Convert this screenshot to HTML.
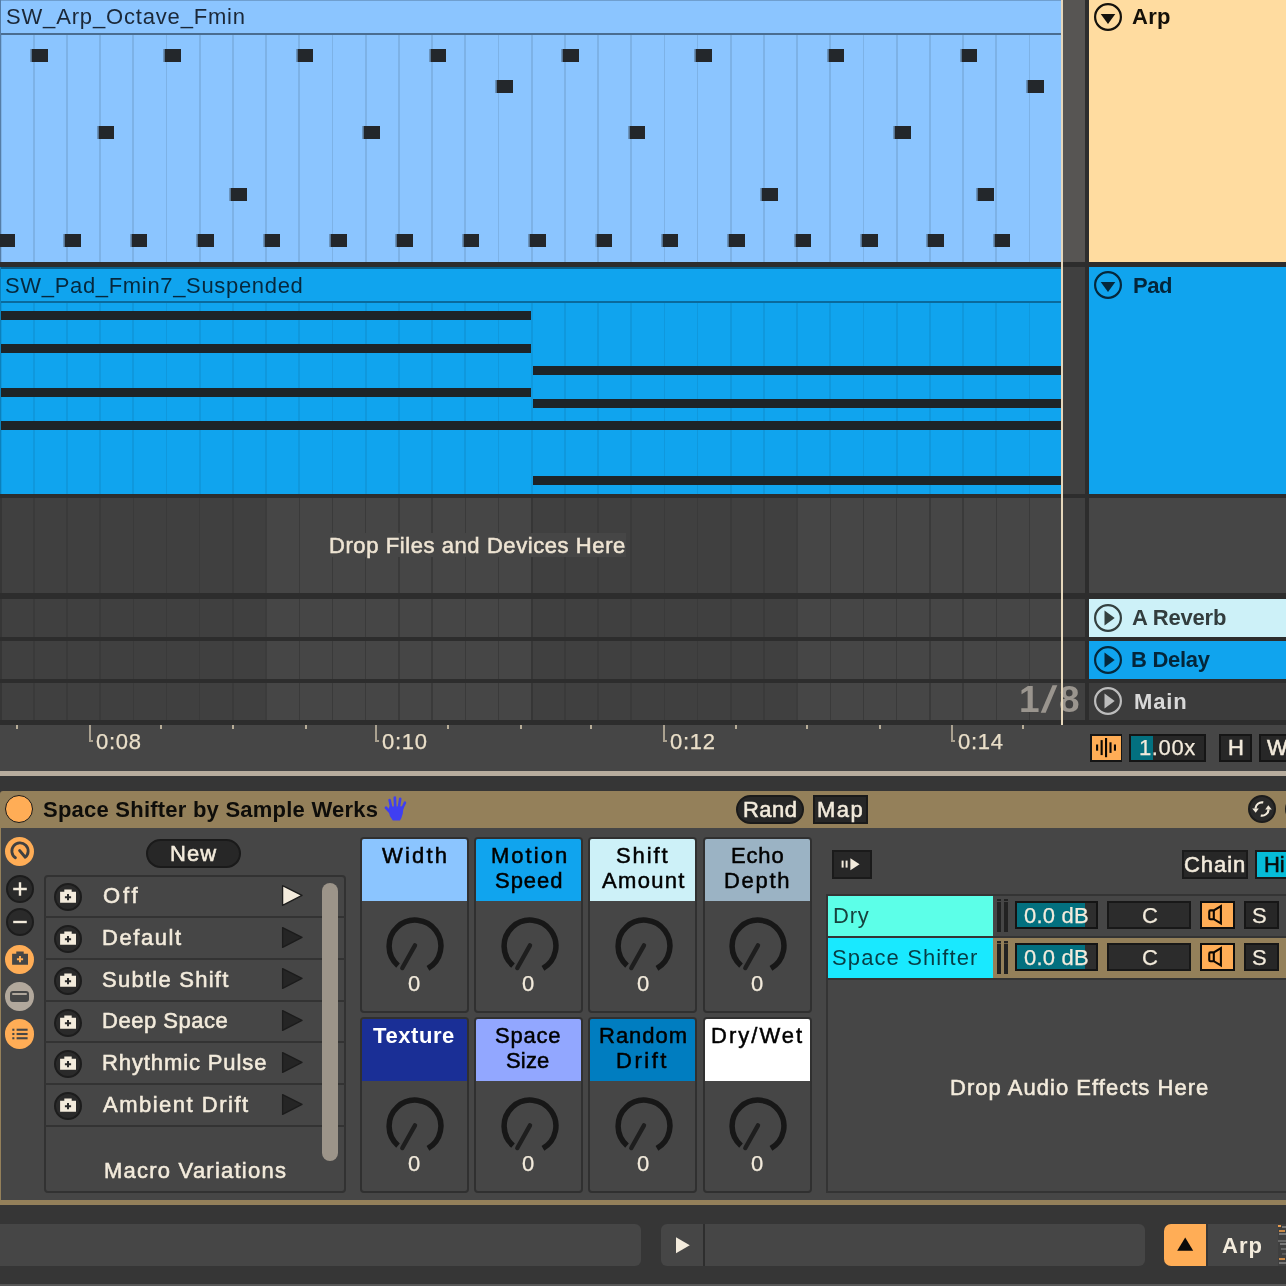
<!DOCTYPE html>
<html lang="en"><head><meta charset="utf-8"><title>Space Shifter</title>
<style>
*{box-sizing:border-box;margin:0;padding:0}
html,body{width:1286px;height:1286px;overflow:hidden;background:#363636}
body{position:relative;font-family:"Liberation Sans",sans-serif;font-size:22px;line-height:22px;color:#f3ebdc}
.a{position:absolute}
.t{position:absolute;white-space:nowrap;line-height:22px;height:22px;will-change:transform}
.b{font-weight:bold}
.s{-webkit-text-stroke:0.55px currentColor}
.m{-webkit-text-stroke:0.25px currentColor}
.s2{-webkit-text-stroke:0.5px currentColor}
.note{position:absolute;background:#23272b;height:13px;width:15.6px;box-shadow:-1.6px 0 0 rgba(35,39,43,.5)}
.bar{position:absolute;background:#1d2428;height:9px}
.sep{position:absolute;background:#2d2d2d}
.circ{position:absolute;width:28px;height:28px;border-radius:50%}
.dk{background:#2a2a2a;border:2px solid #1c1c1c}
.or{background:#ffad56}
.box{position:absolute;background:#272727;border:2px solid #1a1a1a}
.cell{position:absolute;width:109px;height:176px;border:2px solid #303030;border-radius:4px;background:#464646}
.hd{position:absolute;left:0;top:0;width:105px;height:62px;border-radius:2px 2px 0 0}
.row{position:absolute;left:45px;width:300px;height:2px;background:#333}
svg{position:absolute;overflow:visible}
</style></head>
<body>
<div class="a" style="left:0;top:0;width:1061px;height:262px;background:#8bc5ff"></div>
<div class="a" style="left:0;top:267px;width:1061px;height:227px;background:#10a4ee"></div>
<div class="sep" style="left:0;top:262px;width:1286px;height:5px;background:#2d2d2d"></div>
<div class="a" style="left:0;top:494px;width:1089px;height:231px;background:#404040"></div>
<div class="a" style="left:265.52px;top:494px;width:265.52px;height:231px;background:#464646"></div>
<div class="a" style="left:796.56px;top:494px;width:264.44px;height:231px;background:#464646"></div>
<div class="a" style="left:-0.30px;top:35px;width:1.8px;height:227px;background:#7db2e6"></div>
<div class="a" style="left:-0.30px;top:303px;width:1.8px;height:191px;background:#0f98dd"></div>
<div class="a" style="left:-0.40px;top:497px;width:2.0px;height:228px;background:#363636"></div>
<div class="a" style="left:32.89px;top:35px;width:1.8px;height:227px;background:#7db2e6"></div>
<div class="a" style="left:32.89px;top:303px;width:1.8px;height:191px;background:#0f98dd"></div>
<div class="a" style="left:33.04px;top:497px;width:1.5px;height:228px;background:#3a3a3a"></div>
<div class="a" style="left:66.08px;top:35px;width:1.8px;height:227px;background:#7db2e6"></div>
<div class="a" style="left:66.08px;top:303px;width:1.8px;height:191px;background:#0f98dd"></div>
<div class="a" style="left:66.23px;top:497px;width:1.5px;height:228px;background:#3a3a3a"></div>
<div class="a" style="left:99.27px;top:35px;width:1.8px;height:227px;background:#7db2e6"></div>
<div class="a" style="left:99.27px;top:303px;width:1.8px;height:191px;background:#0f98dd"></div>
<div class="a" style="left:99.42px;top:497px;width:1.5px;height:228px;background:#3a3a3a"></div>
<div class="a" style="left:132.46px;top:35px;width:1.8px;height:227px;background:#7db2e6"></div>
<div class="a" style="left:132.46px;top:303px;width:1.8px;height:191px;background:#0f98dd"></div>
<div class="a" style="left:132.61px;top:497px;width:1.5px;height:228px;background:#3a3a3a"></div>
<div class="a" style="left:165.65px;top:35px;width:1.8px;height:227px;background:#7db2e6"></div>
<div class="a" style="left:165.65px;top:303px;width:1.8px;height:191px;background:#0f98dd"></div>
<div class="a" style="left:165.80px;top:497px;width:1.5px;height:228px;background:#3a3a3a"></div>
<div class="a" style="left:198.84px;top:35px;width:1.8px;height:227px;background:#7db2e6"></div>
<div class="a" style="left:198.84px;top:303px;width:1.8px;height:191px;background:#0f98dd"></div>
<div class="a" style="left:198.99px;top:497px;width:1.5px;height:228px;background:#3a3a3a"></div>
<div class="a" style="left:232.03px;top:35px;width:1.8px;height:227px;background:#7db2e6"></div>
<div class="a" style="left:232.03px;top:303px;width:1.8px;height:191px;background:#0f98dd"></div>
<div class="a" style="left:232.18px;top:497px;width:1.5px;height:228px;background:#3a3a3a"></div>
<div class="a" style="left:265.22px;top:35px;width:1.8px;height:227px;background:#7db2e6"></div>
<div class="a" style="left:265.22px;top:303px;width:1.8px;height:191px;background:#0f98dd"></div>
<div class="a" style="left:265.12px;top:497px;width:2.0px;height:228px;background:#3c3c3c"></div>
<div class="a" style="left:298.41px;top:35px;width:1.8px;height:227px;background:#7db2e6"></div>
<div class="a" style="left:298.41px;top:303px;width:1.8px;height:191px;background:#0f98dd"></div>
<div class="a" style="left:298.56px;top:497px;width:1.5px;height:228px;background:#3a3a3a"></div>
<div class="a" style="left:331.60px;top:35px;width:1.8px;height:227px;background:#7db2e6"></div>
<div class="a" style="left:331.60px;top:303px;width:1.8px;height:191px;background:#0f98dd"></div>
<div class="a" style="left:331.75px;top:497px;width:1.5px;height:228px;background:#3a3a3a"></div>
<div class="a" style="left:364.79px;top:35px;width:1.8px;height:227px;background:#7db2e6"></div>
<div class="a" style="left:364.79px;top:303px;width:1.8px;height:191px;background:#0f98dd"></div>
<div class="a" style="left:364.94px;top:497px;width:1.5px;height:228px;background:#3a3a3a"></div>
<div class="a" style="left:397.98px;top:35px;width:1.8px;height:227px;background:#7db2e6"></div>
<div class="a" style="left:397.98px;top:303px;width:1.8px;height:191px;background:#0f98dd"></div>
<div class="a" style="left:398.13px;top:497px;width:1.5px;height:228px;background:#3a3a3a"></div>
<div class="a" style="left:431.17px;top:35px;width:1.8px;height:227px;background:#7db2e6"></div>
<div class="a" style="left:431.17px;top:303px;width:1.8px;height:191px;background:#0f98dd"></div>
<div class="a" style="left:431.32px;top:497px;width:1.5px;height:228px;background:#3a3a3a"></div>
<div class="a" style="left:464.36px;top:35px;width:1.8px;height:227px;background:#7db2e6"></div>
<div class="a" style="left:464.36px;top:303px;width:1.8px;height:191px;background:#0f98dd"></div>
<div class="a" style="left:464.51px;top:497px;width:1.5px;height:228px;background:#3a3a3a"></div>
<div class="a" style="left:497.55px;top:35px;width:1.8px;height:227px;background:#7db2e6"></div>
<div class="a" style="left:497.55px;top:303px;width:1.8px;height:191px;background:#0f98dd"></div>
<div class="a" style="left:497.70px;top:497px;width:1.5px;height:228px;background:#3a3a3a"></div>
<div class="a" style="left:530.74px;top:35px;width:1.8px;height:227px;background:#7db2e6"></div>
<div class="a" style="left:530.74px;top:303px;width:1.8px;height:191px;background:#0f98dd"></div>
<div class="a" style="left:530.64px;top:497px;width:2.0px;height:228px;background:#363636"></div>
<div class="a" style="left:563.93px;top:35px;width:1.8px;height:227px;background:#7db2e6"></div>
<div class="a" style="left:563.93px;top:303px;width:1.8px;height:191px;background:#0f98dd"></div>
<div class="a" style="left:564.08px;top:497px;width:1.5px;height:228px;background:#3a3a3a"></div>
<div class="a" style="left:597.12px;top:35px;width:1.8px;height:227px;background:#7db2e6"></div>
<div class="a" style="left:597.12px;top:303px;width:1.8px;height:191px;background:#0f98dd"></div>
<div class="a" style="left:597.27px;top:497px;width:1.5px;height:228px;background:#3a3a3a"></div>
<div class="a" style="left:630.31px;top:35px;width:1.8px;height:227px;background:#7db2e6"></div>
<div class="a" style="left:630.31px;top:303px;width:1.8px;height:191px;background:#0f98dd"></div>
<div class="a" style="left:630.46px;top:497px;width:1.5px;height:228px;background:#3a3a3a"></div>
<div class="a" style="left:663.50px;top:35px;width:1.8px;height:227px;background:#7db2e6"></div>
<div class="a" style="left:663.50px;top:303px;width:1.8px;height:191px;background:#0f98dd"></div>
<div class="a" style="left:663.65px;top:497px;width:1.5px;height:228px;background:#3a3a3a"></div>
<div class="a" style="left:696.69px;top:35px;width:1.8px;height:227px;background:#7db2e6"></div>
<div class="a" style="left:696.69px;top:303px;width:1.8px;height:191px;background:#0f98dd"></div>
<div class="a" style="left:696.84px;top:497px;width:1.5px;height:228px;background:#3a3a3a"></div>
<div class="a" style="left:729.88px;top:35px;width:1.8px;height:227px;background:#7db2e6"></div>
<div class="a" style="left:729.88px;top:303px;width:1.8px;height:191px;background:#0f98dd"></div>
<div class="a" style="left:730.03px;top:497px;width:1.5px;height:228px;background:#3a3a3a"></div>
<div class="a" style="left:763.07px;top:35px;width:1.8px;height:227px;background:#7db2e6"></div>
<div class="a" style="left:763.07px;top:303px;width:1.8px;height:191px;background:#0f98dd"></div>
<div class="a" style="left:763.22px;top:497px;width:1.5px;height:228px;background:#3a3a3a"></div>
<div class="a" style="left:796.26px;top:35px;width:1.8px;height:227px;background:#7db2e6"></div>
<div class="a" style="left:796.26px;top:303px;width:1.8px;height:191px;background:#0f98dd"></div>
<div class="a" style="left:796.16px;top:497px;width:2.0px;height:228px;background:#3c3c3c"></div>
<div class="a" style="left:829.45px;top:35px;width:1.8px;height:227px;background:#7db2e6"></div>
<div class="a" style="left:829.45px;top:303px;width:1.8px;height:191px;background:#0f98dd"></div>
<div class="a" style="left:829.60px;top:497px;width:1.5px;height:228px;background:#3a3a3a"></div>
<div class="a" style="left:862.64px;top:35px;width:1.8px;height:227px;background:#7db2e6"></div>
<div class="a" style="left:862.64px;top:303px;width:1.8px;height:191px;background:#0f98dd"></div>
<div class="a" style="left:862.79px;top:497px;width:1.5px;height:228px;background:#3a3a3a"></div>
<div class="a" style="left:895.83px;top:35px;width:1.8px;height:227px;background:#7db2e6"></div>
<div class="a" style="left:895.83px;top:303px;width:1.8px;height:191px;background:#0f98dd"></div>
<div class="a" style="left:895.98px;top:497px;width:1.5px;height:228px;background:#3a3a3a"></div>
<div class="a" style="left:929.02px;top:35px;width:1.8px;height:227px;background:#7db2e6"></div>
<div class="a" style="left:929.02px;top:303px;width:1.8px;height:191px;background:#0f98dd"></div>
<div class="a" style="left:929.17px;top:497px;width:1.5px;height:228px;background:#3a3a3a"></div>
<div class="a" style="left:962.21px;top:35px;width:1.8px;height:227px;background:#7db2e6"></div>
<div class="a" style="left:962.21px;top:303px;width:1.8px;height:191px;background:#0f98dd"></div>
<div class="a" style="left:962.36px;top:497px;width:1.5px;height:228px;background:#3a3a3a"></div>
<div class="a" style="left:995.40px;top:35px;width:1.8px;height:227px;background:#7db2e6"></div>
<div class="a" style="left:995.40px;top:303px;width:1.8px;height:191px;background:#0f98dd"></div>
<div class="a" style="left:995.55px;top:497px;width:1.5px;height:228px;background:#3a3a3a"></div>
<div class="a" style="left:1028.59px;top:35px;width:1.8px;height:227px;background:#7db2e6"></div>
<div class="a" style="left:1028.59px;top:303px;width:1.8px;height:191px;background:#0f98dd"></div>
<div class="a" style="left:1028.74px;top:497px;width:1.5px;height:228px;background:#3a3a3a"></div>
<div class="a" style="left:1061.78px;top:35px;width:1.8px;height:227px;background:#7db2e6"></div>
<div class="a" style="left:1061.78px;top:303px;width:1.8px;height:191px;background:#0f98dd"></div>
<div class="a" style="left:0;top:0;width:1061px;height:1px;background:#6f9fcf"></div>
<div class="a" style="left:0;top:33px;width:1061px;height:2px;background:#4a6d90"></div>
<div class="a" style="left:0;top:267px;width:1061px;height:1.6px;background:#07608c"></div>
<div class="a" style="left:0;top:301px;width:1061px;height:2px;background:#0a6a9c"></div>
<div class="a" style="left:0;top:0;width:1px;height:262px;background:#557da6"></div>
<div class="a" style="left:0;top:267px;width:1px;height:227px;background:#0c80bb"></div>
<div class="sep" style="left:0;top:493.5px;width:1286px;height:4.0px"></div>
<div class="sep" style="left:0;top:593.0px;width:1286px;height:6.0px"></div>
<div class="sep" style="left:0;top:637.0px;width:1286px;height:4.0px"></div>
<div class="sep" style="left:0;top:679.0px;width:1286px;height:4.0px"></div>
<div class="sep" style="left:0;top:720.0px;width:1286px;height:4.5px"></div>
<div class="note" style="left:32.29px;top:49.0px"></div>
<div class="note" style="left:165.05px;top:49.0px"></div>
<div class="note" style="left:297.81px;top:49.0px"></div>
<div class="note" style="left:430.57px;top:49.0px"></div>
<div class="note" style="left:563.33px;top:49.0px"></div>
<div class="note" style="left:696.09px;top:49.0px"></div>
<div class="note" style="left:828.85px;top:49.0px"></div>
<div class="note" style="left:961.61px;top:49.0px"></div>
<div class="note" style="left:496.95px;top:79.5px"></div>
<div class="note" style="left:1027.99px;top:79.5px"></div>
<div class="note" style="left:98.67px;top:126.0px"></div>
<div class="note" style="left:364.19px;top:126.0px"></div>
<div class="note" style="left:629.71px;top:126.0px"></div>
<div class="note" style="left:895.23px;top:126.0px"></div>
<div class="note" style="left:231.43px;top:187.5px"></div>
<div class="note" style="left:762.47px;top:187.5px"></div>
<div class="note" style="left:978.20px;top:187.5px"></div>
<div class="note" style="left:-0.90px;top:234.0px"></div>
<div class="note" style="left:65.48px;top:234.0px"></div>
<div class="note" style="left:131.86px;top:234.0px"></div>
<div class="note" style="left:198.24px;top:234.0px"></div>
<div class="note" style="left:264.62px;top:234.0px"></div>
<div class="note" style="left:331.00px;top:234.0px"></div>
<div class="note" style="left:397.38px;top:234.0px"></div>
<div class="note" style="left:463.76px;top:234.0px"></div>
<div class="note" style="left:530.14px;top:234.0px"></div>
<div class="note" style="left:596.52px;top:234.0px"></div>
<div class="note" style="left:662.90px;top:234.0px"></div>
<div class="note" style="left:729.28px;top:234.0px"></div>
<div class="note" style="left:795.66px;top:234.0px"></div>
<div class="note" style="left:862.04px;top:234.0px"></div>
<div class="note" style="left:928.42px;top:234.0px"></div>
<div class="note" style="left:994.80px;top:234.0px"></div>
<div class="bar" style="left:1px;top:311px;width:529.5px"></div>
<div class="bar" style="left:1px;top:344px;width:529.5px"></div>
<div class="bar" style="left:1px;top:388px;width:529.5px"></div>
<div class="bar" style="left:1px;top:421px;width:1060px"></div>
<div class="bar" style="left:532.5px;top:366px;width:528.5px"></div>
<div class="bar" style="left:532.5px;top:399px;width:528.5px"></div>
<div class="bar" style="left:532.5px;top:476px;width:528.5px"></div>
<div class="t" style="left:5.65px;top:5.75px;color:#1b2838;letter-spacing:0.83px;">SW_Arp_Octave_Fmin</div>
<div class="t" style="left:5.30px;top:274.75px;color:#06283d;letter-spacing:0.67px;">SW_Pad_Fmin7_Suspended</div>
<div class="a" style="left:328px;top:533px;width:298px;height:24px;background:#464646"></div>
<div class="t s" style="left:328.50px;top:534.75px;color:#eee4d3;letter-spacing:0.58px;">Drop Files and Devices Here</div>
<div class="a" style="left:1063px;top:0;width:22px;height:262px;background:#575553"></div>
<div class="a" style="left:1063px;top:267px;width:22px;height:227px;background:#404040"></div>
<div class="a" style="left:1085px;top:0;width:4px;height:725px;background:#2d2d2d"></div>
<div class="a" style="left:1061px;top:0;width:2px;height:725px;background:#e6d7bb"></div>
<div class="a" style="left:1089px;top:0;width:197px;height:262px;background:#ffdca0"></div>
<div class="a" style="left:1089px;top:267px;width:197px;height:227px;background:#10a4ee"></div>
<div class="a" style="left:1089px;top:497.5px;width:197px;height:95.5px;background:#464646"></div>
<div class="a" style="left:1089px;top:599px;width:197px;height:38px;background:#cdf1f8"></div>
<div class="a" style="left:1089px;top:641px;width:197px;height:38px;background:#10a4ee"></div>
<div class="a" style="left:1089px;top:683px;width:197px;height:37px;background:#3c3c3c"></div>
<svg style="left:1093.2px;top:1.7px" width="30" height="30" viewBox="-15 -15 30 30"><circle r="12.9" fill="none" stroke="#15120c" stroke-width="2.2"/><path d="M-7.3 -3.1 L7.3 -3.1 L0 7 Z" fill="#15120c"/></svg>
<svg style="left:1093.2px;top:270.4px" width="30" height="30" viewBox="-15 -15 30 30"><circle r="12.9" fill="none" stroke="#05283c" stroke-width="2.2"/><path d="M-7.3 -3.1 L7.3 -3.1 L0 7 Z" fill="#05283c"/></svg>
<svg style="left:1093.4px;top:602.8px" width="30" height="30" viewBox="-15 -15 30 30"><circle r="12.9" fill="none" stroke="#34403f" stroke-width="2.2"/><path d="M-3.5 -7.4 L6.7 0 L-3.5 7.4 Z" fill="#34403f"/></svg>
<svg style="left:1093.4px;top:644.8px" width="30" height="30" viewBox="-15 -15 30 30"><circle r="12.9" fill="none" stroke="#05283c" stroke-width="2.2"/><path d="M-3.5 -7.4 L6.7 0 L-3.5 7.4 Z" fill="#05283c"/></svg>
<svg style="left:1093.4px;top:686.2px" width="30" height="30" viewBox="-15 -15 30 30"><circle r="12.9" fill="none" stroke="#bdbdbd" stroke-width="2.2"/><path d="M-3.5 -7.4 L6.7 0 L-3.5 7.4 Z" fill="#bdbdbd"/></svg>
<div class="t b" style="left:1132.25px;top:5.75px;color:#141008;letter-spacing:0.25px;">Arp</div>
<div class="t b" style="left:1132.55px;top:274.75px;color:#04263a;letter-spacing:-0.45px;">Pad</div>
<div class="t b" style="left:1132.10px;top:606.75px;color:#333d3e;letter-spacing:-0.20px;">A Reverb</div>
<div class="t b" style="left:1131.30px;top:648.75px;color:#04263a;letter-spacing:-0.30px;">B Delay</div>
<div class="t b" style="left:1133.50px;top:690.75px;color:#d8d8d8;letter-spacing:0.87px;">Main</div>
<div class="t b" style="left:1018.90px;top:681.25px;font-size:37px;line-height:37px;height:37px;color:#9a958e;letter-spacing:4.60px;">1<span style="display:inline-block;transform:skewX(-12deg) scaleX(1.12)">/</span>8</div>
<div class="a" style="left:1061px;top:683px;width:2px;height:42px;background:#e6d7bb"></div>
<div class="a" style="left:0;top:724.5px;width:1286px;height:46.5px;background:#464646"></div>
<div class="a" style="left:0;top:771px;width:1286px;height:4.6px;background:#b7ac9d"></div>
<div class="a" style="left:89px;top:725px;width:2px;height:17px;background:#aaa190"></div>
<div class="a" style="left:89px;top:740px;width:4px;height:2px;background:#aaa190"></div>
<div class="a" style="left:375px;top:725px;width:2px;height:17px;background:#aaa190"></div>
<div class="a" style="left:375px;top:740px;width:4px;height:2px;background:#aaa190"></div>
<div class="a" style="left:663px;top:725px;width:2px;height:17px;background:#aaa190"></div>
<div class="a" style="left:663px;top:740px;width:4px;height:2px;background:#aaa190"></div>
<div class="a" style="left:951px;top:725px;width:2px;height:17px;background:#aaa190"></div>
<div class="a" style="left:951px;top:740px;width:4px;height:2px;background:#aaa190"></div>
<div class="a" style="left:16px;top:725px;width:2px;height:4px;background:#b8ad98"></div>
<div class="a" style="left:160px;top:725px;width:2px;height:4px;background:#b8ad98"></div>
<div class="a" style="left:232px;top:725px;width:2px;height:4px;background:#b8ad98"></div>
<div class="a" style="left:305px;top:725px;width:2px;height:4px;background:#b8ad98"></div>
<div class="a" style="left:447px;top:725px;width:2px;height:4px;background:#b8ad98"></div>
<div class="a" style="left:520px;top:725px;width:2px;height:4px;background:#b8ad98"></div>
<div class="a" style="left:590px;top:725px;width:2px;height:4px;background:#b8ad98"></div>
<div class="a" style="left:735px;top:725px;width:2px;height:4px;background:#b8ad98"></div>
<div class="a" style="left:806px;top:725px;width:2px;height:4px;background:#b8ad98"></div>
<div class="a" style="left:879px;top:725px;width:2px;height:4px;background:#b8ad98"></div>
<div class="a" style="left:1022px;top:725px;width:2px;height:4px;background:#b8ad98"></div>
<div class="t m" style="left:96.35px;top:730.75px;color:#eadfc9;letter-spacing:0.70px;">0:08</div>
<div class="t m" style="left:381.85px;top:730.75px;color:#eadfc9;letter-spacing:0.70px;">0:10</div>
<div class="t m" style="left:670.35px;top:730.75px;color:#eadfc9;letter-spacing:0.70px;">0:12</div>
<div class="t m" style="left:957.85px;top:730.75px;color:#eadfc9;letter-spacing:0.70px;">0:14</div>
<div class="a" style="left:1090px;top:733.8px;width:32.4px;height:27.8px;background:#151515"></div>
<div class="a" style="left:1091.8px;top:735.7px;width:28.8px;height:24.2px;background:#ffad56"></div>
<svg style="left:1092px;top:736px" width="28.5" height="24" viewBox="-14.25 -12 28.5 24"><rect x="-10.20" y="-3.50" width="2.1" height="6.2" fill="#0c0804"/><rect x="-5.65" y="-7.90" width="2.1" height="15.0" fill="#0c0804"/><rect x="-1.25" y="-10.00" width="2.1" height="19.2" fill="#0c0804"/><rect x="3.20" y="-5.70" width="2.1" height="10.6" fill="#0c0804"/><rect x="7.65" y="-3.50" width="2.1" height="6.2" fill="#0c0804"/></svg>
<div class="box" style="left:1129.3px;top:733.8px;width:76.7px;height:27.8px;border-color:#151515"></div>
<div class="a" style="left:1131.2px;top:735.8px;width:22.1px;height:24px;background:#03707f"></div>
<div class="t m" style="left:1138.75px;top:736.75px;color:#f3ebdc;letter-spacing:0.62px;">1.00x</div>
<div class="box" style="left:1219px;top:733.8px;width:33px;height:27.8px;border-color:#151515"></div>
<div class="t s" style="left:1228.10px;top:736.75px;color:#f3ebdc;">H</div>
<div class="box" style="left:1259px;top:733.8px;width:40px;height:27.8px;border-color:#151515"></div>
<div class="t s" style="left:1266.55px;top:736.75px;color:#f3ebdc;">W</div>
<div class="a" style="left:0;top:791px;width:1300px;height:414px;background:#94805a;border-radius:3px 0 0 0"></div>
<div class="a" style="left:1.1px;top:828px;width:1300px;height:372px;background:#464646"></div>
<div class="circ" style="left:5.4px;top:795px;background:#ffad56;border:1.7px solid #1a1a1a"></div>
<div class="t b" style="left:43.10px;top:798.75px;color:#0e0d0a;letter-spacing:0.23px;">Space Shifter by Sample Werks</div>
<svg style="left:383.7px;top:795px" width="25" height="27" viewBox="0 0 25 27"><g fill="none" stroke="#3f3ff2" stroke-linecap="round"><path d="M7.2 12.5 L5.6 5" stroke-width="2.6"/><path d="M11.2 11 L10.8 2.6" stroke-width="2.7"/><path d="M15 11.5 L16.2 3.8" stroke-width="2.6"/><path d="M18.2 13.5 L21 7.6" stroke-width="2.5"/><path d="M6.5 17.5 L2 12.8" stroke-width="2.8"/></g><path d="M5.2 11.5 L19.6 11.2 L18.8 18.5 Q17.5 23.5 16 25.5 L8.8 25.5 Q5 21 4.6 16 Z" fill="#3f3ff2"/></svg>
<div class="box" style="left:735.5px;top:795px;width:68px;height:28.6px;border-radius:15px"></div>
<div class="t s" style="left:742.85px;top:798.75px;color:#f3ebdc;letter-spacing:0.43px;">Rand</div>
<div class="box" style="left:812.5px;top:795px;width:55px;height:28.6px"></div>
<div class="t s" style="left:817.25px;top:798.75px;color:#f3ebdc;letter-spacing:1.45px;">Map</div>
<div class="circ dk" style="left:1248px;top:795px"></div>
<svg style="left:1248px;top:795px" width="28" height="28" viewBox="-14 -14 28 28"><g fill="none" stroke="#f3ebdc" stroke-width="2.2"><path d="M1.25 -6.6 A6.7 6.7 0 0 0 -6.6 -0.4"/><path d="M-1.25 6.6 A6.7 6.7 0 0 0 6.6 0.4"/></g><path d="M-9.8 -0.6 L-3.2 -0.6 L-6.3 3.8 Z" fill="#f3ebdc"/><path d="M9.8 0.6 L3.2 0.6 L6.3 -3.8 Z" fill="#f3ebdc"/></svg>
<div class="circ dk" style="left:1284.6px;top:795px"></div>
<div class="circ or" style="left:5.1px;top:836.8px;width:29px;height:29px"></div>
<svg style="left:4.6px;top:836.3px" width="30" height="30" viewBox="-15 -15 30 30"><path d="M-4.56 6.76 A8.15 8.15 0 1 1 5.24 6.24 L-0.4 -0.5" fill="none" stroke="#3f4041" stroke-width="2.8" stroke-linecap="round" stroke-linejoin="round"/></svg>
<div class="circ dk" style="left:5.6px;top:874.7px"></div>
<svg style="left:5.6px;top:874.7px" width="28" height="28" viewBox="-14 -14 28 28"><path d="M-6.8 0 H6.8 M0 -6.8 V6.8" stroke="#f3ebdc" stroke-width="2.4" fill="none"/></svg>
<div class="circ dk" style="left:5.6px;top:907.5px"></div>
<svg style="left:5.6px;top:907.5px" width="28" height="28" viewBox="-14 -14 28 28"><path d="M-6.8 0 H6.8" stroke="#f3ebdc" stroke-width="2.4" fill="none"/></svg>
<div class="circ or" style="left:5px;top:944.5px;width:29.4px;height:29.4px"></div>
<svg style="left:9.6px;top:951.0px" width="20" height="16" viewBox="-10 -8 20 16"><path d="M-7.9 -5.2 L-3.7 -5.2 L-3.7 -7.5 L3.7 -7.5 L3.7 -5.2 L8 -5.2 L8 5.7 L-7.9 5.7 Z" fill="#464646"/><path d="M-3.1 0.15 H3.1 M0 -2.95 V3.25" stroke="#ffad56" stroke-width="2" fill="none"/></svg>
<div class="circ" style="left:4.9px;top:981.8px;width:29.2px;height:29.2px;background:#b2a89c"></div>
<div class="a" style="left:9.9px;top:991px;width:19.4px;height:10.9px;background:#464646;border-radius:3px"></div>
<div class="a" style="left:11.8px;top:993px;width:15.6px;height:2.4px;background:#b0a79c;border-radius:1px"></div>
<div class="circ or" style="left:5px;top:1019.3px;width:29.4px;height:29.4px"></div>
<svg style="left:4.7px;top:1019px" width="30" height="30" viewBox="-15 -15 30 30"><rect x="-7.7" y="-5.30" width="2.1" height="2.1" fill="#464646"/><rect x="-3.4" y="-5.30" width="11" height="2.1" fill="#464646"/><rect x="-7.7" y="-1.05" width="2.1" height="2.1" fill="#464646"/><rect x="-3.4" y="-1.05" width="11" height="2.1" fill="#464646"/><rect x="-7.7" y="3.20" width="2.1" height="2.1" fill="#464646"/><rect x="-3.4" y="3.20" width="11" height="2.1" fill="#464646"/></svg>
<div class="box" style="left:146.4px;top:839px;width:94.3px;height:29px;border-radius:15px"></div>
<div class="t s" style="left:169.70px;top:842.75px;color:#f3ebdc;letter-spacing:1.10px;">New</div>
<div class="a" style="left:43.5px;top:874.7px;width:302.5px;height:318.4px;border:2px solid #323232;border-radius:4px"></div>
<div class="row" style="top:916.0px"></div>
<div class="circ dk" style="left:53.8px;top:883.2px"></div>
<svg style="left:58.0px;top:889.2px" width="20" height="16" viewBox="-10 -8 20 16"><path d="M-7.9 -5.2 L-3.7 -5.2 L-3.7 -7.5 L3.7 -7.5 L3.7 -5.2 L8 -5.2 L8 5.7 L-7.9 5.7 Z" fill="#f3ebdc"/><path d="M-3.1 0.15 H3.1 M0 -2.95 V3.25" stroke="#2a2a2a" stroke-width="2" fill="none"/></svg>
<div class="t s" style="left:102.90px;top:884.75px;color:#f3ebdc;letter-spacing:2.80px;">Off</div>
<svg style="left:280px;top:882.8px" width="26" height="26" viewBox="0 0 26 26"><path d="M2.6 2.6 L22 12.4 L2.6 22.4 Z" fill="#f3ebdc" stroke="#1c1c1c" stroke-width="1.3" stroke-linejoin="round"/></svg>
<div class="row" style="top:957.8px"></div>
<div class="circ dk" style="left:53.8px;top:925.0px"></div>
<svg style="left:58.0px;top:931.0px" width="20" height="16" viewBox="-10 -8 20 16"><path d="M-7.9 -5.2 L-3.7 -5.2 L-3.7 -7.5 L3.7 -7.5 L3.7 -5.2 L8 -5.2 L8 5.7 L-7.9 5.7 Z" fill="#f3ebdc"/><path d="M-3.1 0.15 H3.1 M0 -2.95 V3.25" stroke="#2a2a2a" stroke-width="2" fill="none"/></svg>
<div class="t s" style="left:101.70px;top:926.75px;color:#f3ebdc;letter-spacing:1.57px;">Default</div>
<svg style="left:280px;top:924.6px" width="26" height="26" viewBox="0 0 26 26"><path d="M2.6 2.6 L22 12.4 L2.6 22.4 Z" fill="#252525" stroke="#1c1c1c" stroke-width="1.3" stroke-linejoin="round"/></svg>
<div class="row" style="top:999.6px"></div>
<div class="circ dk" style="left:53.8px;top:966.8px"></div>
<svg style="left:58.0px;top:972.8px" width="20" height="16" viewBox="-10 -8 20 16"><path d="M-7.9 -5.2 L-3.7 -5.2 L-3.7 -7.5 L3.7 -7.5 L3.7 -5.2 L8 -5.2 L8 5.7 L-7.9 5.7 Z" fill="#f3ebdc"/><path d="M-3.1 0.15 H3.1 M0 -2.95 V3.25" stroke="#2a2a2a" stroke-width="2" fill="none"/></svg>
<div class="t s" style="left:101.60px;top:968.75px;color:#f3ebdc;letter-spacing:1.25px;">Subtle Shift</div>
<svg style="left:280px;top:966.4px" width="26" height="26" viewBox="0 0 26 26"><path d="M2.6 2.6 L22 12.4 L2.6 22.4 Z" fill="#252525" stroke="#1c1c1c" stroke-width="1.3" stroke-linejoin="round"/></svg>
<div class="row" style="top:1041.4px"></div>
<div class="circ dk" style="left:53.8px;top:1008.6px"></div>
<svg style="left:58.0px;top:1014.6px" width="20" height="16" viewBox="-10 -8 20 16"><path d="M-7.9 -5.2 L-3.7 -5.2 L-3.7 -7.5 L3.7 -7.5 L3.7 -5.2 L8 -5.2 L8 5.7 L-7.9 5.7 Z" fill="#f3ebdc"/><path d="M-3.1 0.15 H3.1 M0 -2.95 V3.25" stroke="#2a2a2a" stroke-width="2" fill="none"/></svg>
<div class="t s" style="left:102.10px;top:1009.75px;color:#f3ebdc;letter-spacing:0.53px;">Deep Space</div>
<svg style="left:280px;top:1008.2px" width="26" height="26" viewBox="0 0 26 26"><path d="M2.6 2.6 L22 12.4 L2.6 22.4 Z" fill="#252525" stroke="#1c1c1c" stroke-width="1.3" stroke-linejoin="round"/></svg>
<div class="row" style="top:1083.2px"></div>
<div class="circ dk" style="left:53.8px;top:1050.4px"></div>
<svg style="left:58.0px;top:1056.4px" width="20" height="16" viewBox="-10 -8 20 16"><path d="M-7.9 -5.2 L-3.7 -5.2 L-3.7 -7.5 L3.7 -7.5 L3.7 -5.2 L8 -5.2 L8 5.7 L-7.9 5.7 Z" fill="#f3ebdc"/><path d="M-3.1 0.15 H3.1 M0 -2.95 V3.25" stroke="#2a2a2a" stroke-width="2" fill="none"/></svg>
<div class="t s" style="left:101.90px;top:1051.75px;color:#f3ebdc;letter-spacing:0.89px;">Rhythmic Pulse</div>
<svg style="left:280px;top:1050.0px" width="26" height="26" viewBox="0 0 26 26"><path d="M2.6 2.6 L22 12.4 L2.6 22.4 Z" fill="#252525" stroke="#1c1c1c" stroke-width="1.3" stroke-linejoin="round"/></svg>
<div class="row" style="top:1125.0px"></div>
<div class="circ dk" style="left:53.8px;top:1092.2px"></div>
<svg style="left:58.0px;top:1098.2px" width="20" height="16" viewBox="-10 -8 20 16"><path d="M-7.9 -5.2 L-3.7 -5.2 L-3.7 -7.5 L3.7 -7.5 L3.7 -5.2 L8 -5.2 L8 5.7 L-7.9 5.7 Z" fill="#f3ebdc"/><path d="M-3.1 0.15 H3.1 M0 -2.95 V3.25" stroke="#2a2a2a" stroke-width="2" fill="none"/></svg>
<div class="t s" style="left:102.80px;top:1093.75px;color:#f3ebdc;letter-spacing:1.50px;">Ambient Drift</div>
<svg style="left:280px;top:1091.8px" width="26" height="26" viewBox="0 0 26 26"><path d="M2.6 2.6 L22 12.4 L2.6 22.4 Z" fill="#252525" stroke="#1c1c1c" stroke-width="1.3" stroke-linejoin="round"/></svg>
<div class="a" style="left:322px;top:883px;width:15.6px;height:278px;border-radius:8px;background:#9c9489"></div>
<div class="t s" style="left:104.25px;top:1159.75px;color:#f3ebdc;letter-spacing:1.23px;">Macro Variations</div>
<div class="cell" style="left:360.0px;top:837.0px"><div class="hd" style="background:#8bc5ff"></div></div>
<div class="t s2" style="left:382.00px;top:844.75px;color:#000000;letter-spacing:2.20px;">Width</div>
<svg style="left:385.3px;top:915.7px" width="60" height="60" viewBox="-30 -30 60 60"><path d="M-16.99 19.55 A25.90 25.90 0 1 1 12.95 22.43" fill="none" stroke="#171717" stroke-width="5.5"/><path d="M0 -0.6 L-12.69 21.98" stroke="#1e1e1e" stroke-width="4.4" stroke-linecap="round" fill="none"/></svg>
<div class="t m" style="left:408.20px;top:972.75px;color:#f3ebdc;">0</div>
<div class="cell" style="left:474.2px;top:837.0px"><div class="hd" style="background:#10a4ee"></div></div>
<div class="t s2" style="left:490.65px;top:844.75px;color:#000000;letter-spacing:2.02px;">Motion</div>
<div class="t s2" style="left:494.95px;top:869.75px;color:#000000;letter-spacing:0.98px;">Speed</div>
<svg style="left:499.5px;top:915.7px" width="60" height="60" viewBox="-30 -30 60 60"><path d="M-16.99 19.55 A25.90 25.90 0 1 1 12.95 22.43" fill="none" stroke="#171717" stroke-width="5.5"/><path d="M0 -0.6 L-12.69 21.98" stroke="#1e1e1e" stroke-width="4.4" stroke-linecap="round" fill="none"/></svg>
<div class="t m" style="left:522.40px;top:972.75px;color:#f3ebdc;">0</div>
<div class="cell" style="left:588.4px;top:837.0px"><div class="hd" style="background:#cdf1f8"></div></div>
<div class="t s2" style="left:616.15px;top:844.75px;color:#000000;letter-spacing:1.88px;">Shift</div>
<div class="t s2" style="left:602.10px;top:869.75px;color:#000000;letter-spacing:1.32px;">Amount</div>
<svg style="left:613.7px;top:915.7px" width="60" height="60" viewBox="-30 -30 60 60"><path d="M-16.99 19.55 A25.90 25.90 0 1 1 12.95 22.43" fill="none" stroke="#171717" stroke-width="5.5"/><path d="M0 -0.6 L-12.69 21.98" stroke="#1e1e1e" stroke-width="4.4" stroke-linecap="round" fill="none"/></svg>
<div class="t m" style="left:636.60px;top:972.75px;color:#f3ebdc;">0</div>
<div class="cell" style="left:702.6px;top:837.0px"><div class="hd" style="background:#9bb3c4"></div></div>
<div class="t s2" style="left:730.75px;top:844.75px;color:#000000;letter-spacing:0.83px;">Echo</div>
<div class="t s2" style="left:723.80px;top:869.75px;color:#000000;letter-spacing:1.70px;">Depth</div>
<svg style="left:727.9px;top:915.7px" width="60" height="60" viewBox="-30 -30 60 60"><path d="M-16.99 19.55 A25.90 25.90 0 1 1 12.95 22.43" fill="none" stroke="#171717" stroke-width="5.5"/><path d="M0 -0.6 L-12.69 21.98" stroke="#1e1e1e" stroke-width="4.4" stroke-linecap="round" fill="none"/></svg>
<div class="t m" style="left:750.80px;top:972.75px;color:#f3ebdc;">0</div>
<div class="cell" style="left:360.0px;top:1017.0px"><div class="hd" style="background:#1a2f96"></div></div>
<div class="t b" style="left:372.90px;top:1024.75px;color:#ffffff;letter-spacing:0.57px;">Texture</div>
<svg style="left:385.3px;top:1095.7px" width="60" height="60" viewBox="-30 -30 60 60"><path d="M-16.99 19.55 A25.90 25.90 0 1 1 12.95 22.43" fill="none" stroke="#171717" stroke-width="5.5"/><path d="M0 -0.6 L-12.69 21.98" stroke="#1e1e1e" stroke-width="4.4" stroke-linecap="round" fill="none"/></svg>
<div class="t m" style="left:408.20px;top:1152.75px;color:#f3ebdc;">0</div>
<div class="cell" style="left:474.2px;top:1017.0px"><div class="hd" style="background:#92a7ff"></div></div>
<div class="t s2" style="left:495.15px;top:1024.75px;color:#000000;letter-spacing:0.77px;">Space</div>
<div class="t s2" style="left:506.25px;top:1049.75px;color:#000000;letter-spacing:0.17px;">Size</div>
<svg style="left:499.5px;top:1095.7px" width="60" height="60" viewBox="-30 -30 60 60"><path d="M-16.99 19.55 A25.90 25.90 0 1 1 12.95 22.43" fill="none" stroke="#171717" stroke-width="5.5"/><path d="M0 -0.6 L-12.69 21.98" stroke="#1e1e1e" stroke-width="4.4" stroke-linecap="round" fill="none"/></svg>
<div class="t m" style="left:522.40px;top:1152.75px;color:#f3ebdc;">0</div>
<div class="cell" style="left:588.4px;top:1017.0px"><div class="hd" style="background:#007dc0"></div></div>
<div class="t s2" style="left:599.00px;top:1024.75px;color:#000000;letter-spacing:1.00px;">Random</div>
<div class="t s2" style="left:616.45px;top:1049.75px;color:#000000;letter-spacing:2.52px;">Drift</div>
<svg style="left:613.7px;top:1095.7px" width="60" height="60" viewBox="-30 -30 60 60"><path d="M-16.99 19.55 A25.90 25.90 0 1 1 12.95 22.43" fill="none" stroke="#171717" stroke-width="5.5"/><path d="M0 -0.6 L-12.69 21.98" stroke="#1e1e1e" stroke-width="4.4" stroke-linecap="round" fill="none"/></svg>
<div class="t m" style="left:636.60px;top:1152.75px;color:#f3ebdc;">0</div>
<div class="cell" style="left:702.6px;top:1017.0px"><div class="hd" style="background:#ffffff"></div></div>
<div class="t s2" style="left:710.70px;top:1024.75px;color:#000000;letter-spacing:2.03px;">Dry/Wet</div>
<svg style="left:727.9px;top:1095.7px" width="60" height="60" viewBox="-30 -30 60 60"><path d="M-16.99 19.55 A25.90 25.90 0 1 1 12.95 22.43" fill="none" stroke="#171717" stroke-width="5.5"/><path d="M0 -0.6 L-12.69 21.98" stroke="#1e1e1e" stroke-width="4.4" stroke-linecap="round" fill="none"/></svg>
<div class="t m" style="left:750.80px;top:1152.75px;color:#f3ebdc;">0</div>
<div class="box" style="left:832px;top:850px;width:40px;height:28.6px"></div>
<svg style="left:832px;top:850px" width="40" height="28.6" viewBox="0 0 40 28.6"><rect x="9.6" y="10.6" width="2" height="7" fill="#f3ebdc"/><rect x="13.6" y="10.6" width="2" height="7" fill="#f3ebdc"/><path d="M18.4 8.2 L27.6 14.2 L18.4 20.2 Z" fill="#f3ebdc"/></svg>
<div class="box" style="left:1182px;top:850.3px;width:66px;height:28.3px"></div>
<div class="t s" style="left:1183.50px;top:853.75px;color:#f3ebdc;letter-spacing:0.95px;">Chain</div>
<div class="box" style="left:1255px;top:850.3px;width:60px;height:28.3px;background:#06bcd8"></div>
<div class="t s" style="left:1263.85px;top:853.75px;color:#0a0a0a;letter-spacing:-0.10px;">Hi</div>
<div class="a" style="left:826px;top:894px;width:480px;height:298.5px;border:2px solid #343434;background:#464646"></div>
<div class="a" style="left:828px;top:936px;width:460px;height:2.2px;background:#343434"></div>
<div class="a" style="left:828px;top:978px;width:460px;height:1.6px;background:#343434"></div>
<div class="a" style="left:993px;top:938.2px;width:300px;height:39.8px;background:#94805a"></div>
<div class="a" style="left:828px;top:896px;width:165px;height:40px;background:#5cffe8"></div>
<div class="a" style="left:828px;top:938.2px;width:165px;height:39.8px;background:#19e9ff"></div>
<div class="t" style="left:832.50px;top:904.75px;color:#17423d;letter-spacing:0.80px;">Dry</div>
<div class="t" style="left:831.55px;top:946.75px;color:#073d45;letter-spacing:1.11px;">Space Shifter</div>
<div class="a" style="left:997.0px;top:898.6px;width:4.4px;height:33px;background:#222"></div>
<div class="a" style="left:997.0px;top:901.0px;width:4.4px;height:1.2px;background:#464646"></div>
<div class="a" style="left:1004.0px;top:898.6px;width:4.4px;height:33px;background:#222"></div>
<div class="a" style="left:1004.0px;top:901.0px;width:4.4px;height:1.2px;background:#464646"></div>
<div class="box" style="left:1015px;top:901.2px;width:83.2px;height:28px;background:#2e2e2e;border-color:#141414"></div>
<div class="a" style="left:1017px;top:903.2px;width:68px;height:24px;background:#03707f"></div>
<div class="t m" style="left:1024.00px;top:904.75px;color:#f3ebdc;letter-spacing:0.20px;">0.0 dB</div>
<div class="box" style="left:1107px;top:901.2px;width:84px;height:28px;background:#2c2c2c;border-color:#181818"></div>
<div class="t m" style="left:1142.00px;top:904.75px;color:#f3ebdc;">C</div>
<div class="box" style="left:1200px;top:901.2px;width:35px;height:28px;background:#ffad56;border-color:#0e0e0e"></div>
<svg style="left:1200.2px;top:901.2px" width="35.8" height="28" viewBox="0 0 35.8 28"><path d="M10.6 9.4 H13.8 L20.9 5.2 V22.4 L13.8 18.2 H10.6 Q9.25 18.2 9.25 16.9 V10.7 Q9.25 9.4 10.6 9.4 Z" fill="none" stroke="#0c0702" stroke-width="2.1" stroke-linejoin="miter"/><path d="M13.8 9.4 V18.2" stroke="#0c0702" stroke-width="2.1"/></svg>
<div class="box" style="left:1244px;top:901.2px;width:35px;height:28px;background:#272727;border-color:#161616"></div>
<div class="t m" style="left:1252.25px;top:904.75px;color:#f3ebdc;">S</div>
<div class="a" style="left:997.0px;top:940.8px;width:4.4px;height:33px;background:#222"></div>
<div class="a" style="left:997.0px;top:943.2px;width:4.4px;height:1.2px;background:#6d5f45"></div>
<div class="a" style="left:1004.0px;top:940.8px;width:4.4px;height:33px;background:#222"></div>
<div class="a" style="left:1004.0px;top:943.2px;width:4.4px;height:1.2px;background:#6d5f45"></div>
<div class="box" style="left:1015px;top:943.4px;width:83.2px;height:28px;background:#2e2e2e;border-color:#141414"></div>
<div class="a" style="left:1017px;top:945.4px;width:68px;height:24px;background:#03707f"></div>
<div class="t m" style="left:1024.00px;top:946.75px;color:#f3ebdc;letter-spacing:0.20px;">0.0 dB</div>
<div class="box" style="left:1107px;top:943.4px;width:84px;height:28px;background:#2c2c2c;border-color:#181818"></div>
<div class="t m" style="left:1142.00px;top:946.75px;color:#f3ebdc;">C</div>
<div class="box" style="left:1200px;top:943.4px;width:35px;height:28px;background:#ffad56;border-color:#0e0e0e"></div>
<svg style="left:1200.2px;top:943.4px" width="35.8" height="28" viewBox="0 0 35.8 28"><path d="M10.6 9.4 H13.8 L20.9 5.2 V22.4 L13.8 18.2 H10.6 Q9.25 18.2 9.25 16.9 V10.7 Q9.25 9.4 10.6 9.4 Z" fill="none" stroke="#0c0702" stroke-width="2.1" stroke-linejoin="miter"/><path d="M13.8 9.4 V18.2" stroke="#0c0702" stroke-width="2.1"/></svg>
<div class="box" style="left:1244px;top:943.4px;width:35px;height:28px;background:#272727;border-color:#161616"></div>
<div class="t m" style="left:1252.25px;top:946.75px;color:#f3ebdc;">S</div>
<div class="t s" style="left:950.45px;top:1076.75px;color:#f3ebdc;letter-spacing:1.03px;">Drop Audio Effects Here</div>
<div class="a" style="left:-10px;top:1224px;width:651px;height:42px;border-radius:6px;background:#464646"></div>
<div class="a" style="left:661px;top:1224px;width:483.6px;height:42px;border-radius:6px;background:#464646"></div>
<div class="a" style="left:702.6px;top:1224px;width:2.2px;height:42px;background:#2e2e2e"></div>
<svg style="left:675px;top:1236px" width="16" height="18" viewBox="0 0 16 18"><path d="M1 1.2 L14.8 9.2 L1 17.2 Z" fill="#f3ebdc"/></svg>
<div class="a" style="left:1164.4px;top:1224px;width:41.6px;height:42px;border-radius:7px 0 0 7px;background:#ffad56"></div>
<svg style="left:1164.4px;top:1224px" width="41.6" height="42" viewBox="0 0 41.6 42"><path d="M13.2 26.8 L21.2 13.4 L29.2 26.8 Z" fill="#0a0a0a"/></svg>
<div class="a" style="left:1208px;top:1224px;width:80px;height:42px;background:#464646"></div>
<div class="t b" style="left:1222.00px;top:1234.75px;color:#f3ebdc;letter-spacing:1.00px;">Arp</div>
<div class="a" style="left:1277.6px;top:1224px;width:9px;height:42px;background:#3f3f3f"></div>
<div class="a" style="left:1278.4px;top:1225.4px;width:3px;height:2px;background:#e79a4c"></div>
<div class="a" style="left:1282.0px;top:1226.0px;width:5px;height:2px;background:#777"></div>
<div class="a" style="left:1278.6px;top:1230.0px;width:6px;height:2px;background:#c98a48"></div>
<div class="a" style="left:1279.0px;top:1233.0px;width:7px;height:2px;background:#777"></div>
<div class="a" style="left:1278.0px;top:1239.5px;width:8px;height:2px;background:#666"></div>
<div class="a" style="left:1279.5px;top:1243.0px;width:6px;height:2px;background:#777"></div>
<div class="a" style="left:1281.0px;top:1248.0px;width:5px;height:2px;background:#666"></div>
<div class="a" style="left:1282.0px;top:1253.0px;width:4px;height:2px;background:#5a5a5a"></div>
<div class="a" style="left:1278.6px;top:1258.0px;width:6px;height:2px;background:#c98a48"></div>
<div class="a" style="left:1279.0px;top:1262.0px;width:7px;height:2px;background:#777"></div>
<div class="a" style="left:0;top:1283.6px;width:1286px;height:3px;background:#565656"></div>
</body></html>
